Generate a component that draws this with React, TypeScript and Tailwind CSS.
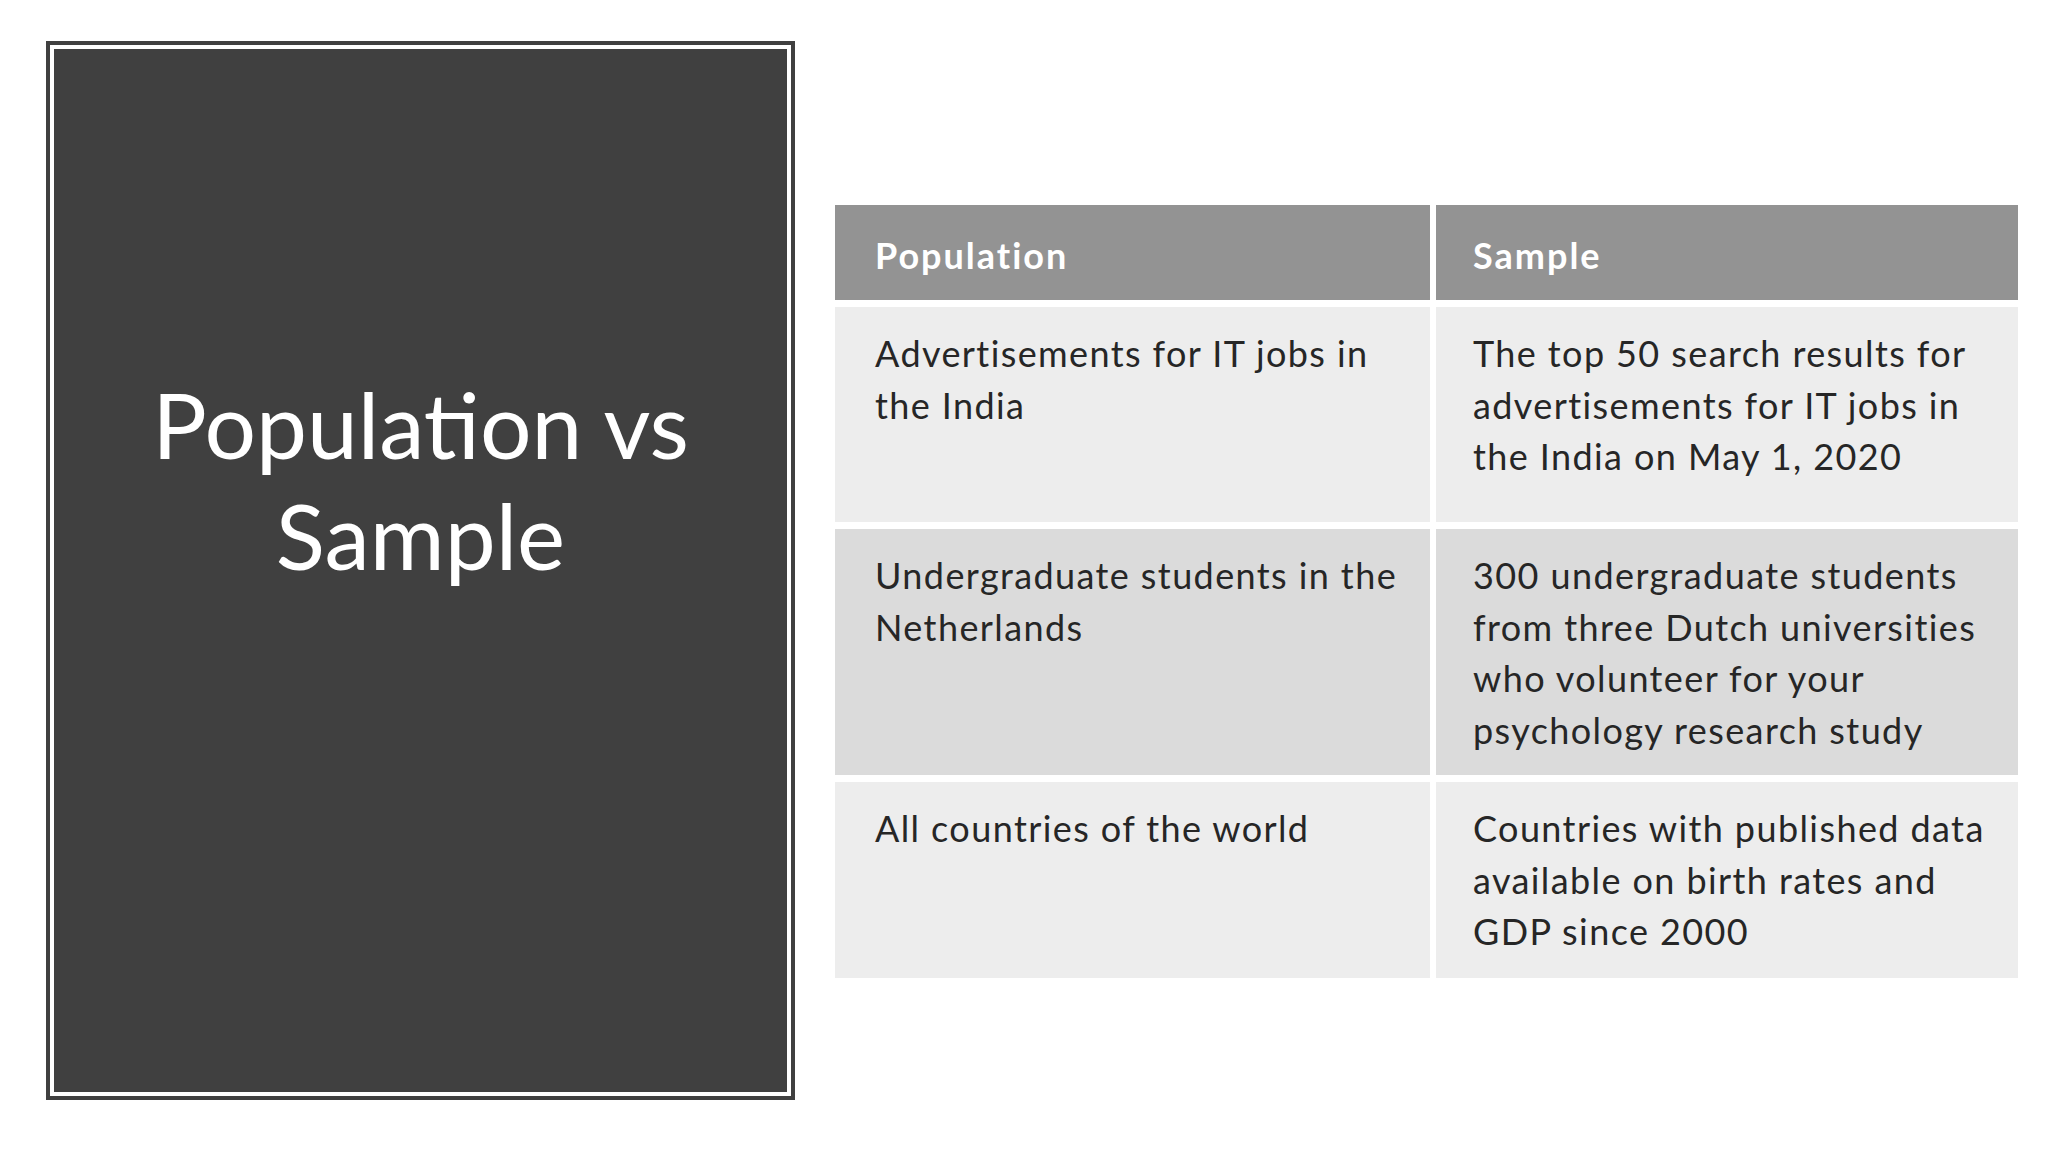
import React from "react";

const rows: { pop: string[]; sample: string[]; bg: string }[] = [
  {
    pop: ["Advertisements for IT jobs in", "the India"],
    sample: ["The top 50 search results for", "advertisements for IT jobs in", "the India on May 1, 2020"],
    bg: "bg-[#ededed]",
  },
  {
    pop: ["Undergraduate students in the", "Netherlands"],
    sample: ["300 undergraduate students", "from three Dutch universities", "who volunteer for your", "psychology research study"],
    bg: "bg-[#dbdbdb]",
  },
  {
    pop: ["All countries of the world"],
    sample: ["Countries with published data", "available on birth rates and", "GDP since 2000"],
    bg: "bg-[#ededed]",
  },
];

function Lines({ lines }: { lines: string[] }) {
  return (
    <>
      {lines.map((l, i) => (
        <div key={i} className="whitespace-nowrap">
          {l}
        </div>
      ))}
    </>
  );
}

export default function App() {
  return (
    <div
      className="w-[2048px] h-[1152px] bg-white flex items-start pl-[46px] pt-[41px] overflow-hidden"
      style={{ fontFamily: "Lato, 'Noto Sans', sans-serif" }}
    >
      <div className="w-[749px] h-[1059px] bg-[#404040] p-[4px] shrink-0">
        <div className="w-full h-full border-[4px] border-white bg-[#404040] flex flex-col items-center pt-[319px]">
          <div className="text-white text-[91px] leading-[111px] text-center">
            <div>Population vs</div>
            <div>Sample</div>
          </div>
        </div>
      </div>

      <div className="ml-[40px] mt-[164px] grid grid-cols-[595px_582px] grid-rows-[95px_215px_246px_196px] gap-x-[6px] gap-y-[7px] text-[36px] leading-[51.5px] tracking-[1.4px]">
        <div className="bg-[#939393] text-white font-bold pl-[40px] pt-[25px] tracking-[2px]">Population</div>
        <div className="bg-[#939393] text-white font-bold pl-[37px] pt-[25px] tracking-[2px]">Sample</div>
        {rows.map((r, i) => (
          <React.Fragment key={i}>
            <div className={`${r.bg} text-[#262626] pl-[40px] pt-[21px]`}>
              <Lines lines={r.pop} />
            </div>
            <div className={`${r.bg} text-[#262626] pl-[37px] pt-[21px]`}>
              <Lines lines={r.sample} />
            </div>
          </React.Fragment>
        ))}
      </div>
    </div>
  );
}
